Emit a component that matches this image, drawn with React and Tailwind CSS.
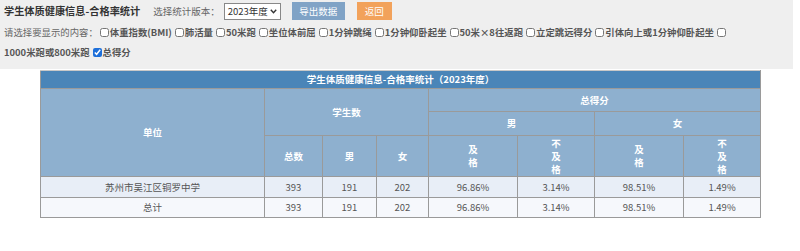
import React from "react";

const items = [
    "体重指数(BMI)",
    "肺活量",
    "50米跑",
    "坐位体前屈",
    "1分钟跳绳",
    "1分钟仰卧起坐",
    "50米×8往返跑",
    "立定跳远得分",
    "引体向上或1分钟仰卧起坐",
];

const rows = [
    { unit: "苏州市吴江区铜罗中学", total: 393, male: 191, female: 202, mp: "96.86%", mf: "3.14%", fp: "98.51%", ff: "1.49%", bg: "bg-[#e8eef7]" },
    { unit: "总计", total: 393, male: 191, female: 202, mp: "96.86%", mf: "3.14%", fp: "98.51%", ff: "1.49%", bg: "bg-[#f6f8fc]" },
];

const Check = ({ checked }) => (
    <input
        type="checkbox"
        defaultChecked={checked}
        className="w-[9px] h-[9px] m-0 mr-[1px] align-[-1px] accent-[#1e6fd9]"
    />
);

const App = () => {
    const th = "border border-[#9a9a9a] font-bold text-white text-center align-middle p-0";
    const td = "border border-[#9a9a9a] text-center text-[#555] p-0";

    return (
        <div className="w-[800px] h-[251px] bg-white text-[9.5px] font-['Noto_Sans_CJK_SC','Noto_Sans',sans-serif]">
            <div className="bg-[#efefef] h-[69px] w-[793px] pl-[4px]">
                <div className="flex items-center h-[22px] whitespace-nowrap">
                    <span className="text-[10.2px] font-bold text-[#333]">学生体质健康信息-合格率统计</span>
                    <span className="ml-[13px] text-[#666]">选择统计版本：</span>
                    <div className="ml-[4px] flex items-center justify-between w-[57px] h-[17px] border border-[#888] bg-white pl-[3px] pr-[3px] text-[#333] text-[9.5px]">
                        <span>2023年度</span>
                        <svg width="7" height="5" viewBox="0 0 7 5">
                            <path d="M0.8 0.8 L3.5 3.8 L6.2 0.8" fill="none" stroke="#333" strokeWidth="1.4" />
                        </svg>
                    </div>
                    <button className="ml-[11px] w-[53px] h-[18px] bg-[#80a3c6] text-white text-[9.5px]">导出数据</button>
                    <button className="ml-[12px] w-[35px] h-[18px] bg-[#f2a25b] text-white text-[9.5px]">返回</button>
                </div>
                <div className="flex items-center h-[21px] whitespace-nowrap text-[9.4px]">
                    <span className="text-[#666] mr-[2px]">请选择要显示的内容：</span>
                    {items.map((it) => (
                        <span key={it} className="mr-[3px] font-bold text-[#555]">
                            <Check />
                            {it}
                        </span>
                    ))}
                    <span>
                        <Check />
                    </span>
                </div>
                <div className="flex items-center h-[19px] whitespace-nowrap font-bold text-[#555] text-[9.4px]">
                    <span className="mr-[3px]">1000米跑或800米跑</span>
                    <span>
                        <Check checked />
                        总得分
                    </span>
                </div>
            </div>

            <table className="mt-[1px] ml-[40px] w-[720px] border-collapse border border-[#c8c8c8] table-fixed">
                <colgroup>
                    <col className="w-[224px]" />
                    <col className="w-[58px]" />
                    <col className="w-[54px]" />
                    <col className="w-[52px]" />
                    <col className="w-[89px]" />
                    <col className="w-[77px]" />
                    <col className="w-[89px]" />
                    <col className="w-[77px]" />
                </colgroup>
                <thead>
                    <tr className="h-[18px] bg-[#4a85b8]">
                        <th colSpan={8} className="border border-[#9a9a9a] border-t-[#c8c8c8] font-bold text-white text-center p-0">
                            学生体质健康信息-合格率统计（2023年度）
                        </th>
                    </tr>
                    <tr className="h-[23px] bg-[#8eb0cf]">
                        <th rowSpan={3} className={th}>单位</th>
                        <th rowSpan={2} colSpan={3} className={th}>学生数</th>
                        <th colSpan={4} className={th}>总得分</th>
                    </tr>
                    <tr className="h-[24px] bg-[#8eb0cf]">
                        <th colSpan={2} className={th}>男</th>
                        <th colSpan={2} className={th}>女</th>
                    </tr>
                    <tr className="h-[41px] bg-[#8eb0cf] leading-[13px]">
                        <th className={th}>总数</th>
                        <th className={th}>男</th>
                        <th className={th}>女</th>
                        <th className={th}>及<br />格</th>
                        <th className={th}>不<br />及<br />格</th>
                        <th className={th}>及<br />格</th>
                        <th className={th}>不<br />及<br />格</th>
                    </tr>
                </thead>
                <tbody>
                    {rows.map((r, i) => (
                        <tr key={i} className={`${r.bg} ${i === 0 ? "h-[21px]" : "h-[20px]"}`}>
                            <td className={td}>{r.unit}</td>
                            <td className={td}>{r.total}</td>
                            <td className={td}>{r.male}</td>
                            <td className={td}>{r.female}</td>
                            <td className={td}>{r.mp}</td>
                            <td className={td}>{r.mf}</td>
                            <td className={td}>{r.fp}</td>
                            <td className={td}>{r.ff}</td>
                        </tr>
                    ))}
                </tbody>
            </table>
        </div>
    );
};

export default App;
